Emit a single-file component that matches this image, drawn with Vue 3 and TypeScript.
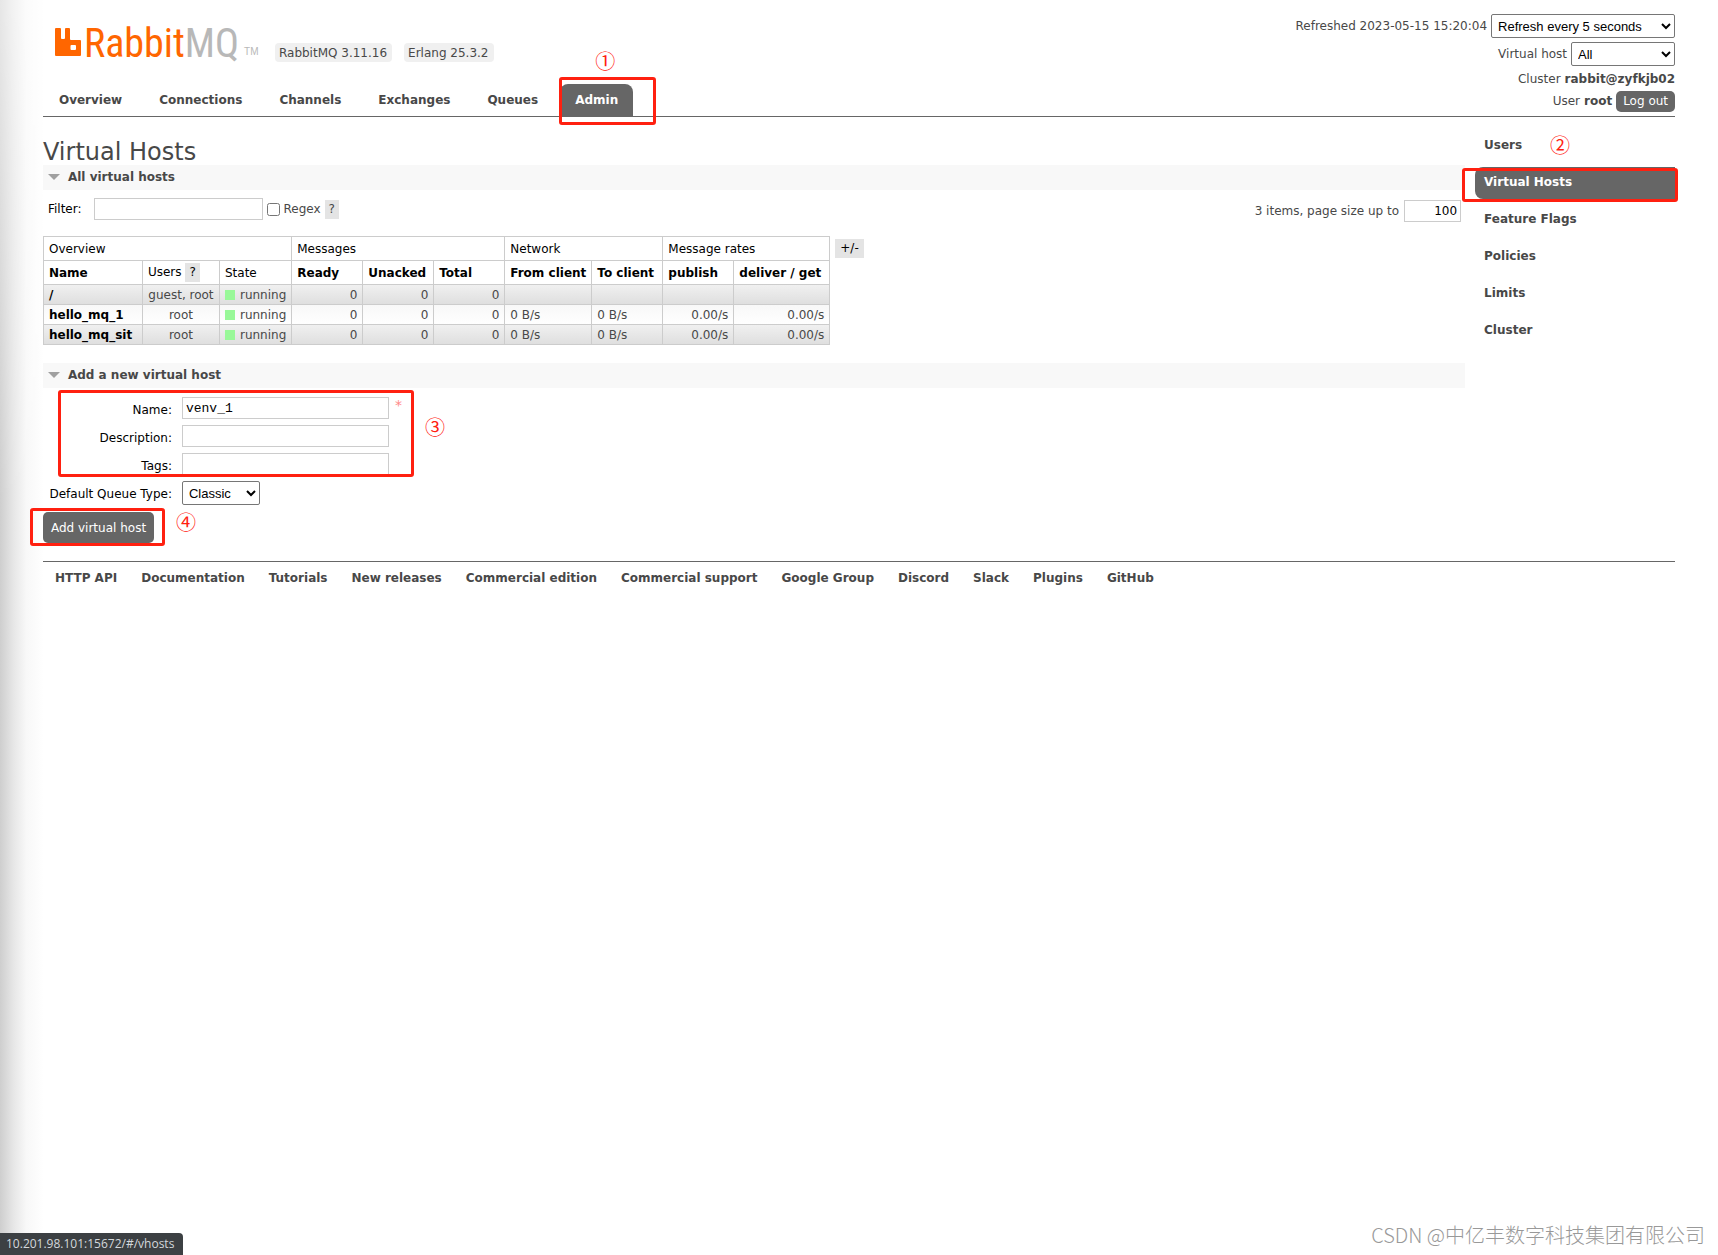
<script setup lang="ts">
import { ref } from 'vue'

interface VirtualHost {
  name: string
  users: string
  state: string
  messages: number[]
  network: string[]
  rates: string[]
}

const tabs = ['Overview', 'Connections', 'Channels', 'Exchanges', 'Queues', 'Admin']
const sections = ['Users', 'Virtual Hosts', 'Feature Flags', 'Policies', 'Limits', 'Cluster']
const footerLinks = [
  'HTTP API', 'Documentation', 'Tutorials', 'New releases', 'Commercial edition',
  'Commercial support', 'Google Group', 'Discord', 'Slack', 'Plugins', 'GitHub',
]
const vhosts: VirtualHost[] = [
  { name: '/', users: 'guest, root', state: 'running', messages: [0, 0, 0], network: ['', ''], rates: ['', ''] },
  { name: 'hello_mq_1', users: 'root', state: 'running', messages: [0, 0, 0], network: ['0 B/s', '0 B/s'], rates: ['0.00/s', '0.00/s'] },
  { name: 'hello_mq_sit', users: 'root', state: 'running', messages: [0, 0, 0], network: ['0 B/s', '0 B/s'], rates: ['0.00/s', '0.00/s'] },
]

const activeTab = ref('Admin')
const activeSection = ref('Virtual Hosts')
const filter = ref('')
const regex = ref(false)
const pageSize = ref('100')
const name = ref('venv_1')
const description = ref('')
const tags = ref('')
</script>

<template>
  <div class="page">
    <div class="edge-shade"></div>
    <div class="outer">
      <header class="header">
        <div class="brand-side">
          <div class="brand">
            <a href="#" class="logo" aria-label="RabbitMQ">
              <svg width="26" height="28" viewBox="0 0 26 28" aria-hidden="true">
                <path fill="#f60" fill-rule="evenodd" d="M1 0h4q1 0 1 1v9q0 1 1 1h2q1 0 1-1V1q0-1 1-1h3q1 0 1 1v10q0 1 1 1h9q1 0 1 1v14q0 1-1 1H1q-1 0-1-1V1q0-1 1-1zM16.500 17q-1 0-1 1v3q0 1 1 1h3.500q1 0 1-1v-3q0-1-1-1z" />
              </svg>
              <span class="wordmark">Rabbit<span class="mq">MQ</span></span>
              <span class="tm">TM</span>
            </a>
            <span class="version">RabbitMQ 3.11.16</span>
            <span class="version">Erlang 25.3.2</span>
          </div>
          <nav class="tabs">
            <div v-for="tab in tabs" :key="tab" class="tab">
              <a href="#" :class="{ selected: tab === activeTab }" @click.prevent="activeTab = tab">{{ tab }}</a>
              <template v-if="tab === 'Admin'">
                <span class="mark mark-tab"></span>
                <span class="step step-tab">①</span>
              </template>
            </div>
          </nav>
        </div>
        <div class="login">
          <div class="login-row">
            <label for="refresh">Refreshed 2023-05-15 15:20:04</label>
            <select id="refresh" class="refresh"><option>Refresh every 5 seconds</option></select>
          </div>
          <div class="login-row">
            <label for="vhost">Virtual host</label>
            <select id="vhost" class="vhost"><option>All</option></select>
          </div>
          <div class="login-row text-row">Cluster <b>rabbit@zyfkjb02</b></div>
          <div class="login-row text-row">User <b>root</b> <button type="button" class="logout">Log out</button></div>
        </div>
      </header>

      <div class="body">
        <main class="main">
          <h1>Virtual Hosts</h1>
          <section>
            <h2><i class="arrow"></i>All virtual hosts</h2>
            <div class="filter">
              <label for="filter" class="dark">Filter:</label>
              <input id="filter" v-model="filter" type="text" class="filter-input" />
              <input id="regex" v-model="regex" type="checkbox" />
              <label for="regex">Regex</label>
              <a href="#" class="help">?</a>
              <div class="paging">
                <label for="size">3 items, page size up to</label>
                <input id="size" v-model="pageSize" type="text" class="size-input" />
              </div>
            </div>
            <div class="listing">
              <table>
                <colgroup>
                  <col class="c-name" /><col class="c-users" /><col class="c-state" />
                  <col class="c-num" /><col class="c-num" /><col class="c-num" />
                  <col class="c-from" /><col class="c-num" /><col class="c-num" /><col class="c-get" />
                </colgroup>
                <thead>
                  <tr>
                    <th colspan="3" class="plain">Overview</th>
                    <th colspan="3" class="plain">Messages</th>
                    <th colspan="2" class="plain">Network</th>
                    <th colspan="2" class="plain">Message rates</th>
                  </tr>
                  <tr>
                    <th>Name</th>
                    <th class="plain">Users <a href="#" class="help">?</a></th>
                    <th class="plain">State</th>
                    <th>Ready</th>
                    <th>Unacked</th>
                    <th>Total</th>
                    <th>From client</th>
                    <th>To client</th>
                    <th>publish</th>
                    <th>deliver / get</th>
                  </tr>
                </thead>
                <tbody>
                  <tr v-for="v in vhosts" :key="v.name">
                    <td><a href="#" class="vhost-link">{{ v.name }}</a></td>
                    <td class="center">{{ v.users }}</td>
                    <td><i class="state"></i>{{ v.state }}</td>
                    <td v-for="(m, i) in v.messages" :key="'m' + i" class="right">{{ m }}</td>
                    <td v-for="(n, i) in v.network" :key="'n' + i">{{ n }}</td>
                    <td v-for="(r, i) in v.rates" :key="'r' + i" class="right">{{ r }}</td>
                  </tr>
                </tbody>
              </table>
              <a href="#" class="help columns">+/-</a>
            </div>
          </section>

          <section>
            <h2><i class="arrow"></i>Add a new virtual host</h2>
            <form @submit.prevent>
              <div class="fields">
                <label for="name">Name:</label>
                <div class="field"><input id="name" v-model="name" type="text" /><span class="required">*</span></div>
                <label for="description">Description:</label>
                <div class="field"><input id="description" v-model="description" type="text" /></div>
                <label for="tags">Tags:</label>
                <div class="field"><input id="tags" v-model="tags" type="text" /></div>
                <label for="queue-type">Default Queue Type:</label>
                <div class="field"><select id="queue-type" class="queue-type"><option>Classic</option></select></div>
                <span class="mark mark-fields"></span>
                <span class="step step-fields">③</span>
              </div>
              <div class="submit">
                <button type="submit">Add virtual host</button>
                <span class="mark mark-submit"></span>
                <span class="step step-submit">④</span>
              </div>
            </form>
          </section>
        </main>

        <nav class="side">
          <div v-for="s in sections" :key="s" class="side-item">
            <a href="#" :class="{ selected: s === activeSection }" @click.prevent="activeSection = s">{{ s }}</a>
            <span v-if="s === 'Users'" class="step step-side">②</span>
            <span v-if="s === 'Virtual Hosts'" class="mark mark-side"></span>
          </div>
        </nav>
      </div>

      <footer class="footer">
        <a v-for="link in footerLinks" :key="link" href="#">{{ link }}</a>
      </footer>
    </div>
    <div class="status">10.201.98.101:15672/#/vhosts</div>
    <div class="watermark">CSDN @中亿丰数字科技集团有限公司</div>
  </div>
</template>

<style>
body {
  margin: 0;
  background: #fff;
}
</style>

<style scoped>
* {
  box-sizing: border-box;
}

.page {
  position: relative;
  min-height: 100vh;
  font: 12px/16px Verdana, "DejaVu Sans", sans-serif;
  color: #484848;
}

.edge-shade {
  position: absolute;
  inset: 0 auto 0 0;
  width: 44px;
  background: linear-gradient(to right, #cecece, #e6e6e6 30%, #f8f8f8 60%, #fff);
  -webkit-mask-image: linear-gradient(to bottom, rgba(0, 0, 0, 0.5), #000 40%);
  mask-image: linear-gradient(to bottom, rgba(0, 0, 0, 0.5), #000 40%);
}

.outer {
  position: relative;
  width: 95%;
  margin: 0 auto;
}

a {
  color: inherit;
  text-decoration: none;
}

.header {
  display: flex;
  justify-content: space-between;
  height: 117px;
  border-bottom: 1px solid #666;
}

.brand-side {
  display: flex;
  flex-direction: column;
  justify-content: space-between;
}

.brand {
  display: flex;
  align-items: flex-end;
  gap: 12px;
  height: 62px;
  padding-left: 12px;
}

.logo {
  display: flex;
  align-items: flex-end;
  width: 208px;
  height: 34px;
  padding-bottom: 6px;
}

.logo svg {
  flex-shrink: 0;
}

.wordmark {
  margin-left: 3px;
  font: 40px/24px "Roboto Condensed", "Open Sans Condensed", "Lato", sans-serif;
  color: #f60;
}

.mq {
  color: #b8b8b8;
}

.tm {
  margin-left: 5px;
  font: 10px/8px "Liberation Sans", Arial, sans-serif;
  color: #b8b8b8;
}

.version {
  padding: 2px 5px 1px 4px;
  border-radius: 4px;
  background: #f0f0f0;
}

.tabs {
  display: flex;
  gap: 7px;
  padding-left: 1px;
}

.tab {
  position: relative;
}

.tab a {
  display: block;
  height: 32px;
  padding: 8px 15px;
  border-radius: 8px 8px 0 0;
  font-weight: bold;
}

.tab .selected {
  background: #666;
  color: #fff;
}

.login {
  display: flex;
  flex-direction: column;
  align-items: flex-end;
  gap: 4px;
  padding-top: 14px;
}

.login-row {
  display: flex;
  align-items: center;
  gap: 4px;
}

.text-row {
  height: 18px;
}

select {
  height: 24px;
  padding: 0 2px;
  border: 1px solid #767676;
  border-radius: 2px;
  background: #fff;
  color: #000;
  font: 13px "Liberation Sans", Arial, sans-serif;
}

.refresh {
  width: 184px;
}

.vhost {
  width: 104px;
}

button {
  border: 0;
  border-radius: 5px;
  background: #666;
  color: #fff;
  font: 12px/16px Verdana, "DejaVu Sans", sans-serif;
}

.logout {
  height: 21px;
  padding: 0 7px;
}

.body {
  display: flex;
  gap: 10px;
}

.main {
  flex: 1;
  padding-top: 23px;
}

h1 {
  margin: 0;
  font-size: 24px;
  line-height: 25px;
  font-weight: normal;
}

h2 {
  display: flex;
  align-items: center;
  gap: 8px;
  height: 25px;
  margin: 0;
  padding: 0 0 1px 5px;
  background: #f8f8f8;
  font-size: 12px;
  line-height: 16px;
}

.arrow {
  border: 6px solid transparent;
  border-top-color: #a0a0a0;
  border-bottom: 0;
}

input[type='text'] {
  height: 22px;
  padding: 0 3px;
  border: 1px solid #ccc;
  background: #fff;
  color: #000;
  font: 13px "Liberation Mono", "Courier New", monospace;
}

input[type='checkbox'] {
  width: 13px;
  height: 13px;
  margin: 0 4px;
}

.dark {
  color: #000;
}

.filter {
  display: flex;
  align-items: center;
  height: 38px;
  padding: 0 4px 0 5px;
}

.filter .filter-input {
  width: 169px;
  margin-left: 12px;
}

.help {
  display: inline-block;
  padding: 1px 4px 2px;
  background: #e4e4e4;
  font-weight: normal;
}

.filter .help {
  margin-left: 4px;
}

.paging {
  display: flex;
  align-items: center;
  gap: 5px;
  margin-top: 4px;
  margin-left: auto;
}

.paging .size-input {
  width: 57px;
  font: 12px Verdana, "DejaVu Sans", sans-serif;
  text-align: right;
}

.listing {
  display: flex;
  align-items: flex-start;
  gap: 5px;
  padding: 8px 0 18px;
}

table {
  border-collapse: collapse;
}

.c-name { width: 99px; }
.c-users { width: 77px; }
.c-state { width: 72px; }
.c-num { width: 71px; }
.c-from { width: 87px; }
.c-get { width: 96px; }

th,
td {
  padding: 0 5px;
  border: 1px solid #ccc;
  text-align: left;
  white-space: nowrap;
}

th {
  height: 24px;
  color: #000;
}

td {
  height: 20px;
}

.plain {
  font-weight: normal;
}

tbody tr {
  background: linear-gradient(#f8f8f8, #fff);
}

tbody tr:nth-child(odd) {
  background: linear-gradient(#f0f0f0, #dedede);
}

.center {
  text-align: center;
}

.right {
  text-align: right;
}

.vhost-link {
  font-weight: bold;
  color: #000;
}

.state {
  display: inline-block;
  width: 10px;
  height: 10px;
  margin-right: 5px;
  background: #98f898;
  vertical-align: -1px;
}

.columns {
  margin-top: 3px;
  padding: 1px 5px 2px;
  color: #000;
}

.fields {
  position: relative;
  display: grid;
  grid-template-columns: 125px 1fr;
  column-gap: 10px;
  grid-auto-rows: 28px;
  width: 371px;
  padding-top: 9px;
  padding-left: 4px;
}

.fields label {
  padding-top: 5px;
  color: #000;
  text-align: right;
  white-space: nowrap;
}

.field {
  display: flex;
  align-items: flex-start;
  gap: 6px;
}

.field input[type='text'] {
  width: 207px;
}

.required {
  font-size: 14px;
  color: #f88;
}

.queue-type {
  width: 78px;
}

.submit {
  position: relative;
  width: fit-content;
  margin-top: 3px;
}

.submit button {
  display: block;
  height: 31px;
  padding: 0 8px;
}

.side {
  display: flex;
  flex-direction: column;
  gap: 5px;
  width: 200px;
  padding-top: 13px;
}

.side-item {
  position: relative;
}

.side a {
  display: block;
  height: 32px;
  padding: 7px 9px;
  border-radius: 8px 0 0 8px;
  font-weight: bold;
}

.side .selected {
  background: #666;
  color: #fff;
}

.footer {
  display: flex;
  gap: 24px;
  margin-top: 18px;
  padding: 8px 12px;
  border-top: 1px solid #666;
  font-weight: bold;
}

.mark {
  position: absolute;
  border: 3px solid #ff2010;
  border-radius: 3px;
  pointer-events: none;
}

.mark-tab {
  inset: -7px -23px -9px -1px;
}

.mark-side {
  inset: 1px -3px -3px -13px;
}

.mark-fields {
  inset: 2px 0 32px 15px;
}

.mark-submit {
  inset: -4px -11px -3px -13px;
}

.step {
  position: absolute;
  font: 20px/20px "Noto Sans CJK SC", sans-serif;
  color: #ff2010;
}

.step-tab {
  top: -33px;
  left: 35px;
}

.step-side {
  top: 5px;
  left: 75px;
}

.step-fields {
  top: 29px;
  right: -31px;
}

.step-submit {
  top: 0;
  right: -42px;
}

.status {
  position: absolute;
  bottom: 0;
  left: 0;
  height: 22px;
  padding: 3px 9px 3px 6px;
  border-top-right-radius: 4px;
  background: #3c4043;
  color: #d4d8dc;
  font: 12px/16px "Segoe UI", "Open Sans", sans-serif;
}

.watermark {
  position: absolute;
  right: 13px;
  bottom: 8px;
  color: #999;
  font: 20px/24px "Noto Sans CJK SC", sans-serif;
  font-weight: 300;
}
</style>
